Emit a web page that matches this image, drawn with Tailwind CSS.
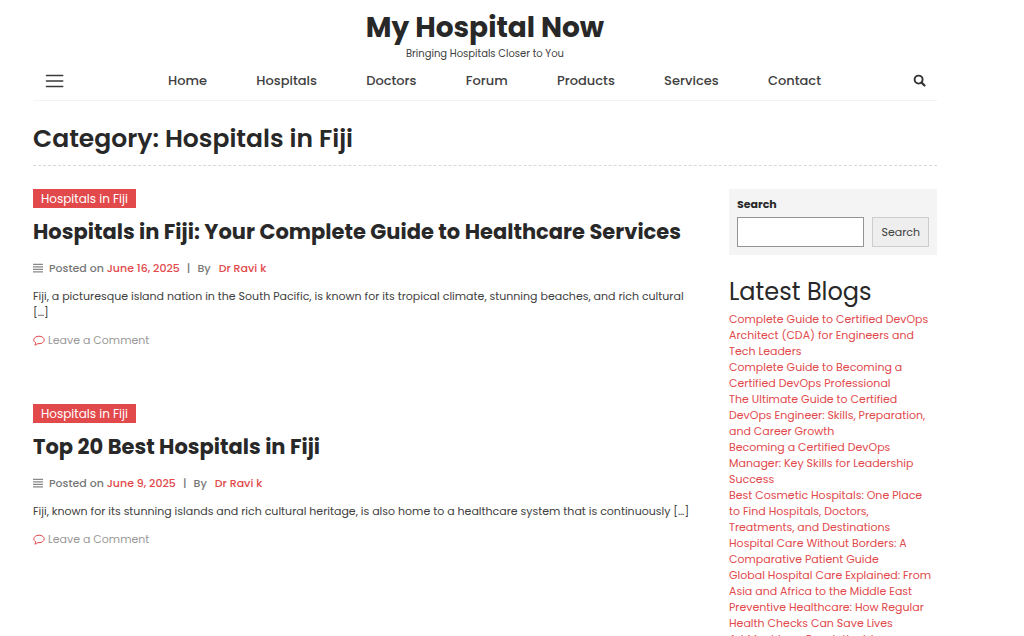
<!DOCTYPE html>
<html lang="en">
  <head>
    <meta charset="UTF-8" />
    <meta name="viewport" content="width=device-width, initial-scale=1.0" />
    <title>Hospitals in Fiji - My Hospital Now</title>
    <script src="https://cdn.jsdelivr.net/npm/@tailwindcss/browser@4"></script>
  </head>
  <body
    class="bg-white pl-[33px] pr-[87px] font-[Poppins,Inter,sans-serif] text-[11px] leading-[16px] text-[#404040]">
    <!-- Header -->
    <header class="border-b border-[#f2f2f2]">
      <div class="pt-[9px] text-center">
        <a href="#" class="block text-[28px] leading-[38px] font-bold text-[#282828]">My Hospital Now</a>
        <p class="text-[10px] leading-[14px]">Bringing Hospitals Closer to You</p>
      </div>
      <div class="flex h-[39px] items-center pr-[11px] pl-3">
        <button type="button" aria-label="Menu" class="flex h-4 w-5 items-center">
          <svg viewBox="0 0 20 14" class="h-[14px] w-5" fill="none" stroke="#3a3a3a" stroke-width="1.6" stroke-linecap="round">
            <path d="M1.500 1.500h16.200M1.500 7h16.200M1.500 12.500h16.200" />
          </svg>
        </button>
        <nav class="mr-[92px] ml-[103px] flex flex-1 justify-between text-[13px] leading-[20px] font-medium">
          <a href="#">Home</a>
          <a href="#">Hospitals</a>
          <a href="#">Doctors</a>
          <a href="#">Forum</a>
          <a href="#">Products</a>
          <a href="#">Services</a>
          <a href="#">Contact</a>
        </nav>
        <button type="button" aria-label="Open search">
          <svg viewBox="0 0 13 13" class="size-[13px]" fill="none" stroke="#333">
            <circle cx="5.6" cy="5.6" r="4" stroke-width="1.9" />
            <path d="M8.600 8.600l2.900 2.900" stroke-width="2.2" stroke-linecap="round" />
          </svg>
        </button>
      </div>
    </header>

    <h1 class="border-b border-dashed border-[#d8d8d8] pt-5 pb-2 text-[25px] leading-[36px] font-semibold text-[#282828]">
      Category: Hospitals in Fiji
    </h1>

    <div class="mt-[23px] grid grid-cols-[minmax(0,1fr)_208px] gap-[30px]">
      <!-- Posts -->
      <main>
        <article>
          <a href="#" class="inline-block bg-[#e1494b] px-2 text-[12px] leading-[19px] text-white">Hospitals in Fiji</a>
          <h2 class="mt-2 text-[21px] leading-[32px] font-bold text-[#282828]">
            <a href="#">Hospitals in Fiji: Your Complete Guide to Healthcare Services</a>
          </h2>
          <div class="mt-3 flex items-center font-medium text-[#777]">
            <svg viewBox="0 0 10 10" class="mr-[6px] size-[10px]" stroke="#888" stroke-width="1.2">
              <path d="M0 1.300h10M0 3.800h10M0 6.300h10M0 8.800h10" />
            </svg>
            <span>Posted on <a href="#" class="text-[#e1494b]">June 16, 2025</a></span>
            <span class="mx-[7px]">|</span>
            <span>By</span>
            <a href="#" class="ml-2 text-[#e1494b]">Dr Ravi k</a>
          </div>
          <p class="mt-3 pr-2">
            Fiji, a picturesque island nation in the South Pacific, is known for its tropical climate, stunning beaches, and rich cultural […]
          </p>
          <a href="#" class="mt-3 flex items-center text-[#999]">
            <svg viewBox="0 0 12 11" class="mr-[3px] h-[11px] w-3" fill="none" stroke="#e1494b" stroke-linejoin="round">
              <path d="M6 1.2C3 1.2.8 2.8.8 4.9c0 1.300.8 2.300 2.100 3-.1.9-.5 1.600-1.100 2.200 1.400-.2 2.400-.7 3.100-1.500.4.1.700.1 1.100.1 3 0 5.200-1.700 5.200-3.800S9 1.200 6 1.200z" />
            </svg>
            Leave a Comment
          </a>
        </article>

        <article class="mt-[56px]">
          <a href="#" class="inline-block bg-[#e1494b] px-2 text-[12px] leading-[19px] text-white">Hospitals in Fiji</a>
          <h2 class="mt-2 text-[21px] leading-[32px] font-bold text-[#282828]">
            <a href="#">Top 20 Best Hospitals in Fiji</a>
          </h2>
          <div class="mt-3 flex items-center font-medium text-[#777]">
            <svg viewBox="0 0 10 10" class="mr-[6px] size-[10px]" stroke="#888" stroke-width="1.2">
              <path d="M0 1.300h10M0 3.800h10M0 6.300h10M0 8.800h10" />
            </svg>
            <span>Posted on <a href="#" class="text-[#e1494b]">June 9, 2025</a></span>
            <span class="mx-[7px]">|</span>
            <span>By</span>
            <a href="#" class="ml-2 text-[#e1494b]">Dr Ravi k</a>
          </div>
          <p class="mt-3 pr-2">
            Fiji, known for its stunning islands and rich cultural heritage, is also home to a healthcare system that is continuously […]
          </p>
          <a href="#" class="mt-3 flex items-center text-[#999]">
            <svg viewBox="0 0 12 11" class="mr-[3px] h-[11px] w-3" fill="none" stroke="#e1494b" stroke-linejoin="round">
              <path d="M6 1.2C3 1.2.8 2.8.8 4.9c0 1.300.8 2.300 2.100 3-.1.9-.5 1.600-1.100 2.200 1.400-.2 2.400-.7 3.100-1.500.4.1.700.1 1.100.1 3 0 5.200-1.700 5.200-3.800S9 1.200 6 1.200z" />
            </svg>
            Leave a Comment
          </a>
        </article>
      </main>

      <!-- Sidebar -->
      <aside>
        <form class="bg-[#f4f4f4] px-2 pt-[7px] pb-2">
          <label for="search" class="block font-bold text-[#282828]">Search</label>
          <div class="mt-[5px] flex gap-2">
            <input id="search" type="search" class="h-[30px] min-w-0 flex-1 border border-[#949494] bg-white px-2" />
            <button type="submit" class="h-[30px] border border-[#ccc] bg-[#eee] px-2">Search</button>
          </div>
        </form>
        <h2 class="mt-5 text-[24px] leading-[34px] text-[#282828]">Latest Blogs</h2>
        <ul class="mt-[2px] pr-1 text-[#e1494b]">
          <li><a href="#">Complete Guide to Certified DevOps Architect (CDA) for Engineers and Tech Leaders</a></li>
          <li><a href="#">Complete Guide to Becoming a Certified DevOps Professional</a></li>
          <li><a href="#">The Ultimate Guide to Certified DevOps Engineer: Skills, Preparation, and Career Growth</a></li>
          <li><a href="#">Becoming a Certified DevOps Manager: Key Skills for Leadership Success</a></li>
          <li><a href="#">Best Cosmetic Hospitals: One Place to Find Hospitals, Doctors, Treatments, and Destinations</a></li>
          <li><a href="#">Hospital Care Without Borders: A Comparative Patient Guide</a></li>
          <li><a href="#">Global Hospital Care Explained: From Asia and Africa to the Middle East</a></li>
          <li><a href="#">Preventive Healthcare: How Regular Health Checks Can Save Lives</a></li>
          <li><a href="#">Art Machines: Revolutionizing</a></li>
        </ul>
      </aside>
    </div>
  </body>
</html>
